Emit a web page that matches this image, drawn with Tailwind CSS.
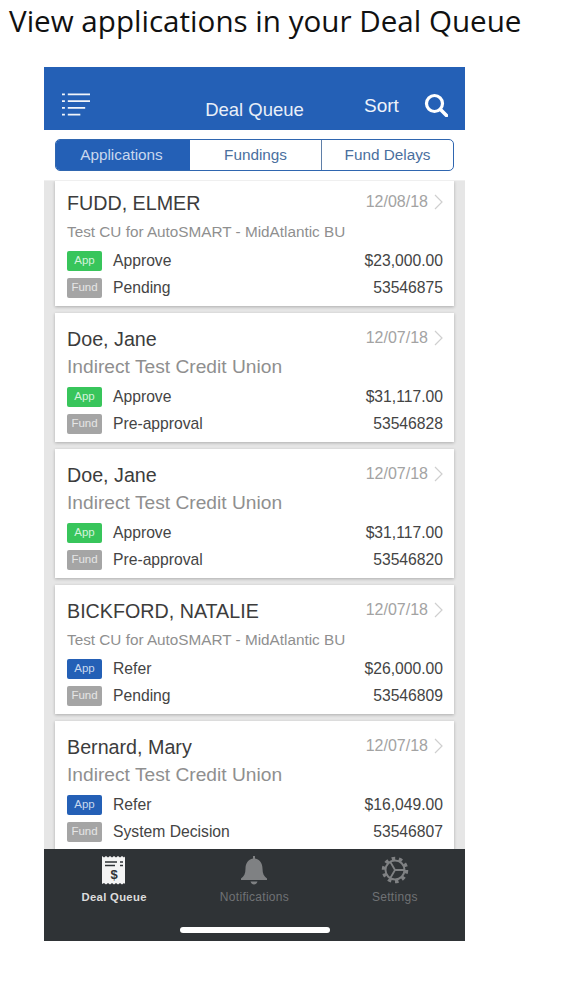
<!DOCTYPE html>
<html><head><meta charset="utf-8"><script src="https://cdn.jsdelivr.net/npm/@tailwindcss/browser@4"></script></head>
<body class="bg-white">
<div class="w-[563px] h-[1000px] overflow-hidden bg-white font-['Liberation_Sans',sans-serif]">
<h1 class="pl-[9px] pt-[2px] h-[67px] text-[29.6px] leading-[38px] font-['Open_Sans',sans-serif] text-[#111] font-normal whitespace-nowrap">View applications in your Deal Queue</h1>
<div class="ml-[44px] w-[421px] h-[874px] flex flex-col">
  <header class="h-[63px] shrink-0 bg-[#2460b6] relative flex items-end text-white">
    <svg class="ml-[18px] mb-[14px] w-[28px] h-[24px]" viewBox="0 0 29 24" fill="none" stroke="#f2f5fa" stroke-width="1.800"><path d="M0 2h3M6 2h23M0 9h3M6 9h23M0 16h3M6 16h18M0 23h3M6 23h13"/></svg>
    <span class="absolute left-0 right-0 top-[32px] text-center text-[18.500px] leading-[22px] text-[#e9eff8]">Deal Queue</span>
    <span class="absolute left-[320px] top-[28px] text-[19px] leading-[22px] text-[#eef3fa]">Sort</span>
    <svg class="absolute left-[380px] top-[26px] w-[24px] h-[24px]" viewBox="0 0 24 24" fill="none" stroke="white"><circle cx="10.500" cy="10.500" r="8" stroke-width="3.200"/><path d="M16.500 16.500L22.500 22.500" stroke-width="3.600" stroke-linecap="round"/></svg>
  </header>
  <nav class="mx-[11px] mt-[9px] h-[32px] shrink-0 flex rounded-[5px] border border-[#2f66b0] overflow-hidden text-[15.300px] bg-white text-[#4a6f9e]">
    <div class="flex-1 flex items-center justify-center pt-px pr-[3px] bg-[#2460b6] text-[#c9d8ee]">Applications</div>
    <div class="flex-1 flex items-center justify-center pt-px border-r border-[#5f7fa8]">Fundings</div>
    <div class="flex-1 flex items-center justify-center pt-px">Fund Delays</div>
  </nav>
  <main class="mt-[9px] flex-1 min-h-0 overflow-hidden bg-[#e6e6e6] px-[11px] flex flex-col gap-[7px] border-t border-[#efefef]">

    <article class="h-[125px] shrink-0 bg-white shadow-[0_1px_3px_rgba(0,0,0,0.25)] pl-[12px] pr-[11px] flex flex-col">
      <div class="mt-[10px] flex items-center justify-between h-[26px]"><span class="text-[19.700px] text-[#3c3c3c]">FUDD, ELMER</span><span class="flex items-center gap-[6px] mb-[4px] text-[16px] text-[#a3a3a3]">12/08/18<svg class="w-[9px] h-[16px]" viewBox="0 0 9 16" fill="none" stroke="#cfcfcf" stroke-width="1.200"><path d="M1 1l7 7-7 7"/></svg></span></div>
      <div class="mt-[4px] h-[22px] leading-[22px] text-[15.300px] text-[#8f8f8f] whitespace-nowrap">Test CU for AutoSMART - MidAtlantic BU</div>
      <div class="mt-[7px] h-[21px] flex items-center"><span class="w-[35px] h-[20px] flex items-center justify-center rounded-[2px] text-[11.500px] text-[#d5f3dc] bg-[#38c55b]">App</span><span class="ml-[11px] text-[15.700px] text-[#444]">Approve</span><span class="ml-auto text-[15.700px] text-[#444]">$23,000.00</span></div>
      <div class="mt-[6px] h-[21px] flex items-center"><span class="w-[35px] h-[20px] flex items-center justify-center rounded-[2px] text-[11.500px] text-[#e6e6e6] bg-[#a5a5a5]">Fund</span><span class="ml-[11px] text-[15.700px] text-[#444]">Pending</span><span class="ml-auto text-[15.700px] text-[#444]">53546875</span></div>
    </article>

    <article class="h-[129px] shrink-0 bg-white shadow-[0_1px_3px_rgba(0,0,0,0.25)] pl-[12px] pr-[11px] flex flex-col">
      <div class="mt-[14px] flex items-center justify-between h-[26px]"><span class="text-[19.700px] text-[#3c3c3c]">Doe, Jane</span><span class="flex items-center gap-[6px] mb-[4px] text-[16px] text-[#a3a3a3]">12/07/18<svg class="w-[9px] h-[16px]" viewBox="0 0 9 16" fill="none" stroke="#cfcfcf" stroke-width="1.200"><path d="M1 1l7 7-7 7"/></svg></span></div>
      <div class="mt-[2px] h-[24px] leading-[24px] text-[19.200px] text-[#8f8f8f] whitespace-nowrap">Indirect Test Credit Union</div>
      <div class="mt-[7px] h-[21px] flex items-center"><span class="w-[35px] h-[20px] flex items-center justify-center rounded-[2px] text-[11.500px] text-[#d5f3dc] bg-[#38c55b]">App</span><span class="ml-[11px] text-[15.700px] text-[#444]">Approve</span><span class="ml-auto text-[15.700px] text-[#444]">$31,117.00</span></div>
      <div class="mt-[6px] h-[21px] flex items-center"><span class="w-[35px] h-[20px] flex items-center justify-center rounded-[2px] text-[11.500px] text-[#e6e6e6] bg-[#a5a5a5]">Fund</span><span class="ml-[11px] text-[15.700px] text-[#444]">Pre-approval</span><span class="ml-auto text-[15.700px] text-[#444]">53546828</span></div>
    </article>

    <article class="h-[129px] shrink-0 bg-white shadow-[0_1px_3px_rgba(0,0,0,0.25)] pl-[12px] pr-[11px] flex flex-col">
      <div class="mt-[14px] flex items-center justify-between h-[26px]"><span class="text-[19.700px] text-[#3c3c3c]">Doe, Jane</span><span class="flex items-center gap-[6px] mb-[4px] text-[16px] text-[#a3a3a3]">12/07/18<svg class="w-[9px] h-[16px]" viewBox="0 0 9 16" fill="none" stroke="#cfcfcf" stroke-width="1.200"><path d="M1 1l7 7-7 7"/></svg></span></div>
      <div class="mt-[2px] h-[24px] leading-[24px] text-[19.200px] text-[#8f8f8f] whitespace-nowrap">Indirect Test Credit Union</div>
      <div class="mt-[7px] h-[21px] flex items-center"><span class="w-[35px] h-[20px] flex items-center justify-center rounded-[2px] text-[11.500px] text-[#d5f3dc] bg-[#38c55b]">App</span><span class="ml-[11px] text-[15.700px] text-[#444]">Approve</span><span class="ml-auto text-[15.700px] text-[#444]">$31,117.00</span></div>
      <div class="mt-[6px] h-[21px] flex items-center"><span class="w-[35px] h-[20px] flex items-center justify-center rounded-[2px] text-[11.500px] text-[#e6e6e6] bg-[#a5a5a5]">Fund</span><span class="ml-[11px] text-[15.700px] text-[#444]">Pre-approval</span><span class="ml-auto text-[15.700px] text-[#444]">53546820</span></div>
    </article>

    <article class="h-[129px] shrink-0 bg-white shadow-[0_1px_3px_rgba(0,0,0,0.25)] pl-[12px] pr-[11px] flex flex-col">
      <div class="mt-[14px] flex items-center justify-between h-[26px]"><span class="text-[19.700px] text-[#3c3c3c]">BICKFORD, NATALIE</span><span class="flex items-center gap-[6px] mb-[4px] text-[16px] text-[#a3a3a3]">12/07/18<svg class="w-[9px] h-[16px]" viewBox="0 0 9 16" fill="none" stroke="#cfcfcf" stroke-width="1.200"><path d="M1 1l7 7-7 7"/></svg></span></div>
      <div class="mt-[4px] h-[22px] leading-[22px] text-[15.300px] text-[#8f8f8f] whitespace-nowrap">Test CU for AutoSMART - MidAtlantic BU</div>
      <div class="mt-[7px] h-[21px] flex items-center"><span class="w-[35px] h-[20px] flex items-center justify-center rounded-[2px] text-[11.500px] text-[#c9d8ee] bg-[#2460b6]">App</span><span class="ml-[11px] text-[15.700px] text-[#444]">Refer</span><span class="ml-auto text-[15.700px] text-[#444]">$26,000.00</span></div>
      <div class="mt-[6px] h-[21px] flex items-center"><span class="w-[35px] h-[20px] flex items-center justify-center rounded-[2px] text-[11.500px] text-[#e6e6e6] bg-[#a5a5a5]">Fund</span><span class="ml-[11px] text-[15.700px] text-[#444]">Pending</span><span class="ml-auto text-[15.700px] text-[#444]">53546809</span></div>
    </article>

    <article class="h-[129px] shrink-0 bg-white shadow-[0_1px_3px_rgba(0,0,0,0.25)] pl-[12px] pr-[11px] flex flex-col">
      <div class="mt-[14px] flex items-center justify-between h-[26px]"><span class="text-[19.700px] text-[#3c3c3c]">Bernard, Mary</span><span class="flex items-center gap-[6px] mb-[4px] text-[16px] text-[#a3a3a3]">12/07/18<svg class="w-[9px] h-[16px]" viewBox="0 0 9 16" fill="none" stroke="#cfcfcf" stroke-width="1.200"><path d="M1 1l7 7-7 7"/></svg></span></div>
      <div class="mt-[2px] h-[24px] leading-[24px] text-[19.200px] text-[#8f8f8f] whitespace-nowrap">Indirect Test Credit Union</div>
      <div class="mt-[7px] h-[21px] flex items-center"><span class="w-[35px] h-[20px] flex items-center justify-center rounded-[2px] text-[11.500px] text-[#c9d8ee] bg-[#2460b6]">App</span><span class="ml-[11px] text-[15.700px] text-[#444]">Refer</span><span class="ml-auto text-[15.700px] text-[#444]">$16,049.00</span></div>
      <div class="mt-[6px] h-[21px] flex items-center"><span class="w-[35px] h-[20px] flex items-center justify-center rounded-[2px] text-[11.500px] text-[#e6e6e6] bg-[#a5a5a5]">Fund</span><span class="ml-[11px] text-[15.700px] text-[#444]">System Decision</span><span class="ml-auto text-[15.700px] text-[#444]">53546807</span></div>
    </article>
  </main>
  <footer class="h-[92px] shrink-0 bg-[#2f3336] relative">
    <div class="grid grid-cols-3">
      <div class="flex flex-col items-center">
        <svg class="mt-[6px] w-[26px] h-[30px]" viewBox="0 0 26 30"><path fill="#f4f4f4" d="M1 1l2 1.500 2-1.500 2 1.500 2-1.500 2 1.500 2-1.500 2 1.500 2-1.500 2 1.500 2-1.500 2 1.500 1-1V29l-1-1-2 1.500-2-1.500-2 1.500-2-1.500-2 1.500-2-1.500-2 1.500-2-1.500-2 1.500-2-1.500-2 1V1z"/><path stroke="#2f3336" stroke-width="1.600" d="M4 7h12M4 10.500h10M19 7h3M19 10.500h3"/><text x="13" y="24" text-anchor="middle" font-size="13" font-weight="700" fill="#2f3336" font-family="Liberation Sans">$</text></svg>
      </div>
      <div class="flex flex-col items-center">
        <svg class="mt-[6px] w-[28px] h-[30px]" viewBox="0 0 28 30"><path fill="#7f8183" d="M13 1h2v2.500c5 1 7.500 5 7.500 10 0 5 1.500 8 4.500 10v1.500H1v-1.500c3-2 4.500-5 4.500-10 0-5 2.500-9 7.500-10zM10.500 26.500h7c-.5 2-2 3-3.500 3s-3-1-3.500-3z"/></svg>
      </div>
      <div class="flex flex-col items-center">
        <svg class="mt-[7px] w-[28px] h-[28px]" viewBox="0 0 28 28" fill="none" stroke="#7f8183"><circle cx="14" cy="14" r="9.500" stroke-width="2"/><circle cx="14" cy="14" r="11.500" stroke-width="3.500" stroke-dasharray="3.500 3.720"/><path d="M14 14H23.500M14 14L9.200 5.800M14 14L9.200 22.200" stroke-width="1.800"/></svg>
      </div>
    </div>
    <div class="absolute left-0 right-0 top-[41px] grid grid-cols-3 text-center leading-[14px] tracking-[0.3px]"><span class="text-[11.300px] font-bold text-[#dcdcdc]">Deal Queue</span><span class="text-[12px] text-[#6f7275]">Notifications</span><span class="text-[12px] text-[#6f7275]">Settings</span></div>
    <div class="absolute left-[136px] top-[78px] w-[150px] h-[6px] rounded-full bg-white"></div>
  </footer>
</div>
</div>
</body></html>
